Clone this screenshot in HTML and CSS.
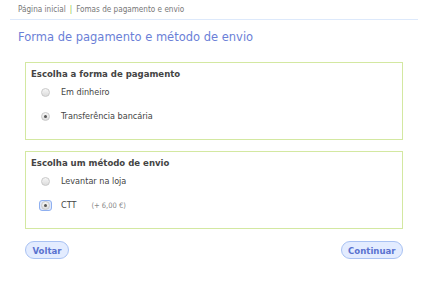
FILE: index.html
```html
<!DOCTYPE html>
<html>
  <head>
    <title>Forma de pagamento e método de envio</title>
    <link rel="stylesheet" href="styles.css">
  </head>
  <body>
    <div id="page">
      <div id="breadcrumb">
        <a href="#">Página inicial</a><span class="sep">|</span><span>Fomas de pagamento e envio</span>
      </div>
      <h1>Forma de pagamento e método de envio</h1>

      <div class="option-box first">
        <h2>Escolha a forma de pagamento</h2>
        <label class="option"><span class="radio-wrap"><span class="radio"></span></span>Em dinheiro</label>
        <label class="option"><span class="radio-wrap"><span class="radio checked"></span></span>Transferência bancária</label>
      </div>

      <div class="option-box">
        <h2>Escolha um método de envio</h2>
        <label class="option"><span class="radio-wrap"><span class="radio"></span></span>Levantar na loja</label>
        <label class="option"><span class="radio-wrap focused"><span class="radio checked"></span></span>CTT <span class="price">(+ 6,00 €)</span></label>
      </div>

      <div id="actions">
        <button>Voltar</button>
        <button>Continuar</button>
      </div>
    </div>
  </body>
</html>
```

FILE: styles.css
```css
body {
  margin: 0;
  font-family: "DejaVu Sans Condensed", "DejaVu Sans", sans-serif;
  font-stretch: condensed;
  color: #444;
  background: #fff;
}
#page {
  margin: 0 12px 0 10px;
}
#breadcrumb {
  height: 19px;
  line-height: 19px;
  padding-left: 8px;
  font-size: 8.1px;
  color: #777;
  border-bottom: 1px solid #dde9fb;
}
#breadcrumb a {
  color: #777;
  text-decoration: none;
}
#breadcrumb .sep {
  color: #8fc34a;
  margin: 0 4px;
}
h1 {
  margin: 9px 0 0 8px;
  font-family: "DejaVu Sans", sans-serif;
  font-stretch: normal;
  font-size: 11.5px;
  font-weight: normal;
  line-height: 16px;
  color: #6b7fd7;
}
.option-box {
  margin: 0 15px 11px 15px;
  border: 1px solid #d3e8a1;
  padding: 5px 5px 0 5px;
  height: 71px;
}
.option-box.first {
  margin-top: 17px;
}
h2 {
  margin: 0;
  font-size: 9.5px;
  font-weight: bold;
  line-height: 12px;
  color: #444;
}
.option {
  display: flex;
  align-items: center;
  height: 24px;
  padding-left: 8px;
  font-size: 9px;
  color: #444;
}
.radio-wrap {
  display: flex;
  align-items: center;
  justify-content: center;
  box-sizing: border-box;
  width: 13px;
  height: 11px;
  margin-right: 9px;
  border: 1px solid transparent;
  border-radius: 3px;
}
.radio-wrap.focused {
  border-color: #8fb0f0;
  background: #dfe8fb;
}
.radio {
  box-sizing: border-box;
  width: 9px;
  height: 9px;
  border-radius: 50%;
  border: 1px solid #c9c9c9;
  background: linear-gradient(#f6f6f6, #dcdcdc);
  position: relative;
}
.radio.checked::after {
  content: "";
  position: absolute;
  left: 2px;
  top: 2px;
  width: 3px;
  height: 3px;
  border-radius: 50%;
  background: #555;
}
.price {
  font-size: 7.5px;
  color: #888;
  margin-left: 15px;
}
#actions {
  display: flex;
  justify-content: space-between;
  margin: 0 15px;
  padding-top: 1px;
}
button {
  font-family: "DejaVu Sans Condensed", "DejaVu Sans", sans-serif;
  font-stretch: condensed;
  font-size: 9.5px;
  font-weight: bold;
  color: #5a72cf;
  background: #e3ecff;
  border: 1px solid #a9c2f3;
  border-radius: 9px;
  height: 18px;
  padding: 0 6.5px;
}
```
